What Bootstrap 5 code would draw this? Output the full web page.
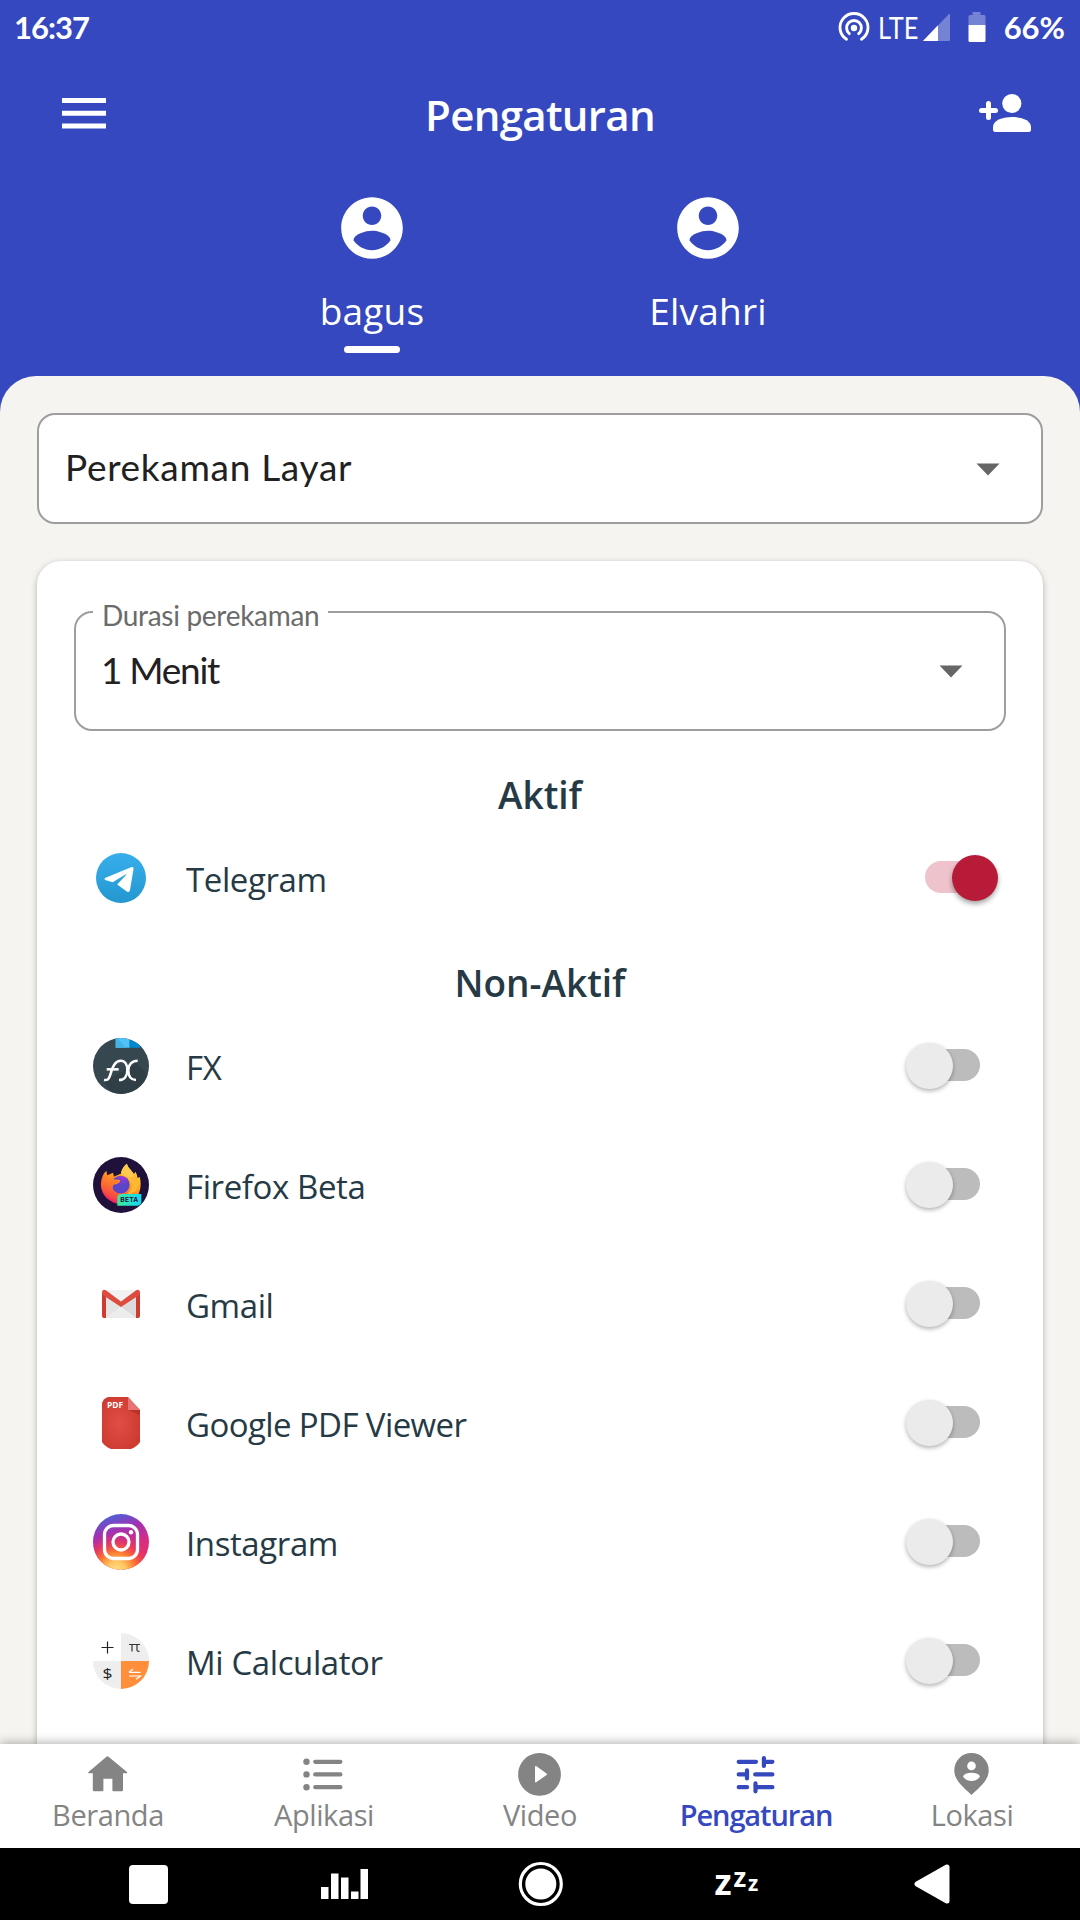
<!DOCTYPE html>
<html lang="id">
<head>
<meta charset="utf-8">
<meta name="viewport" content="width=device-width, initial-scale=1">
<title>Pengaturan</title>
<link href="https://cdn.jsdelivr.net/npm/bootstrap@5.3.0/dist/css/bootstrap.min.css" rel="stylesheet">
<style>
  :root { --brand: #3548c0; --ink: #263a45; }
  body { font-family: "Open Sans", "Noto Sans", sans-serif; color: var(--ink); background: var(--brand); }
  svg { display: block; flex: none; }
  .screen { width: 1080px; height: 1920px; background: var(--brand); }
  .geo { font-family: Lato, "Open Sans", sans-serif; }

  .statusbar { height: 56px; padding: 0 15px 2px 14px; font-size: 31px; line-height: 1; font-weight: 700; }
  .clock { letter-spacing: -1px; }
  .lte { font-size: 30px; font-weight: 400; width: 37px; margin: 0 7px 0 7px; }
  .lte span { display: inline-block; transform: scaleX(.85); transform-origin: 0 50%; }

  .toolbar { height: 116px; padding: 0 49px 0 62px; }
  .toolbar > .side { width: 160px; margin-top: -2px; }
  .toolbar h1 { font-size: 42px; font-weight: 600; letter-spacing: -.7px; margin: 3px 13px 0 0; }

  .profiles { height: 204px; padding: 19px 204px 0; }
  .profile { width: 336px; }
  .profile .who { font-size: 37px; line-height: 46px; letter-spacing: .2px; margin-top: 23px; }
  .profile .bar { width: 56px; height: 7px; border-radius: 4px; background: #fff; margin-top: 12px; }

  .sheet { background: #f5f4f0; border-radius: 36px 36px 0 0; padding: 37px 37px 0; min-height: 0; }
  .picker { border: 2px solid #9e9e9e; border-radius: 18px; background: #fff; color: #212121; font-size: 37px; line-height: 1; }
  .picker-main { height: 111px; padding: 0 41px 0 26px; letter-spacing: .7px; }
  .picker-main span { margin-top: -4px; }
  .picker-main svg { margin-top: 2px; }
  .panel { margin-top: 37px; border-radius: 24px 24px 0 0; padding: 50px 37px 0; box-shadow: 0 2px 6px rgba(0,0,0,.28); border: 0; color: var(--ink); }
  .picker-time { height: 120px; padding: 0 41px 0 25px; letter-spacing: -1.3px; }
  .picker-time .value { margin-top: -3px; }
  .picker-time .tag { left: 17px; top: -13px; padding: 0 9px; background: #fff; color: #6b6b6b; font-size: 28px; line-height: 30px; letter-spacing: -.3px; }

  .group { font-size: 37px; line-height: 48px; font-weight: 600; margin: 0; }
  .group-on { margin-top: 41px; line-height: 46px; }
  .group-off { margin-top: 23px; line-height: 46px; }
  .approw { height: 119px; padding: 0 0 0 19px; border: 0; background: none; color: var(--ink); }
  .approw .icon { width: 56px; height: 56px; }
  .approw .name { font-size: 33px; line-height: 46px; letter-spacing: -.4px; margin-left: 37px; padding-top: 4px; }
  .switch { width: 76px; height: 46px; margin-right: 24px; }
  .switch .track { width: 54px; height: 32px; border-radius: 16px; background: #bcbcbc; right: 2px; top: 6px; }
  .switch .knob { width: 46.5px; height: 46.5px; border-radius: 50%; background: #ebebeb; left: 0; top: 0; box-shadow: 0 2px 4px rgba(0,0,0,.3); }
  .switch.on { margin-right: 8px; }
  .switch.on .track { background: #eec3cc; right: 19px; }
  .switch.on .knob { background: #b81b38; left: auto; right: 0; box-shadow: 0 3px 5px rgba(0,0,0,.35); }

  .tabs { height: 104px; background: #fff; color: #848484; box-shadow: 0 -1px 10px rgba(0,0,0,.32); z-index: 2; }
  .tabs a { color: inherit; text-decoration: none; width: 216px; padding-top: 6px; font-size: 29px; line-height: 33px; letter-spacing: -.4px; }
  .tabs a.active { color: var(--brand); font-weight: 600; letter-spacing: -1.1px; }
  .sysnav { height: 72px; background: #000; padding: 0 50px; }
  .sysnav div { width: 196px; }
</style>
</head>
<body>
<div class="screen d-flex flex-column overflow-hidden mx-auto">

  <header class="text-white">
    <div class="statusbar geo d-flex justify-content-between align-items-center">
      <span class="clock">16:37</span>
      <div class="d-flex align-items-center">
        <svg width="34" height="34" viewBox="0 0 34 34" fill="none" stroke="#fff" stroke-width="2.9" stroke-linecap="round">
          <path d="M9.5 29.3A14 14 0 1 1 24.500 29.3"/><path d="M12.300 23.600A7.400 7.400 0 1 1 21.700 23.600"/><circle cx="17" cy="18" r="3.200" fill="#fff" stroke="none"/>
        </svg>
        <span class="lte"><span>LTE</span></span>
        <svg width="28" height="28" viewBox="0 0 28 28"><path d="M1 28 27 1q1-1 1 1v25q0 1-1 1z" fill="#fff" opacity=".32"/><path d="M1 28 16 12.300V28z" fill="#fff"/></svg>
        <svg width="18" height="32" viewBox="0 0 18 32" style="margin-left:18px"><path d="M4.500 1h8v3H16q1.500 0 1.500 1.500V14H.5V5.500Q.5 4 2 4h2.500z" fill="#fff" opacity=".32"/><path d="M.5 14h17v15.500q0 1.500-1.500 1.500H2Q.5 31 .5 29.500z" fill="#fff"/></svg>
        <span style="margin-left:18px">66%</span>
      </div>
    </div>

    <div class="toolbar d-flex align-items-center">
      <div class="side">
        <svg width="44" height="31" viewBox="0 0 44 31" fill="#fff"><path d="M0 0h44v5H0zM0 12.800h44v5H0zM0 25.500h44v5H0z"/></svg>
      </div>
      <h1 class="flex-grow-1 text-center">Pengaturan</h1>
      <div class="side d-flex justify-content-end">
        <svg width="52" height="40" viewBox="0 0 52 40" fill="#fff"><circle cx="32.800" cy="10.500" r="9.600"/><path d="M14 34c0-6.500 9-10 19-10s19 3.500 19 10v2.500q0 2.500-2.500 2.500h-33Q14 39 14 36.500z"/><path d="M2.500 17.500h14M9.500 10.500v14" stroke="#fff" stroke-width="5" stroke-linecap="round"/></svg>
      </div>
    </div>

    <div class="profiles d-flex">
      <div class="profile d-flex flex-column align-items-center">
        <svg width="74" height="74" viewBox="0 0 24 24" fill="#fff"><path d="M12 2C6.480 2 2 6.480 2 12s4.480 10 10 10 10-4.480 10-10S17.520 2 12 2zm0 3c1.660 0 3 1.340 3 3s-1.340 3-3 3-3-1.340-3-3 1.340-3 3-3zm0 14.200c-2.500 0-4.710-1.280-6-3.220.03-1.990 4-3.080 6-3.080 1.990 0 5.970 1.090 6 3.080-1.290 1.940-3.500 3.220-6 3.220z"/></svg>
        <span class="who">bagus</span>
        <span class="bar"></span>
      </div>
      <div class="profile d-flex flex-column align-items-center">
        <svg width="74" height="74" viewBox="0 0 24 24" fill="#fff"><path d="M12 2C6.480 2 2 6.480 2 12s4.480 10 10 10 10-4.480 10-10S17.520 2 12 2zm0 3c1.660 0 3 1.340 3 3s-1.340 3-3 3-3-1.340-3-3 1.340-3 3-3zm0 14.200c-2.500 0-4.710-1.280-6-3.220.03-1.990 4-3.080 6-3.080 1.990 0 5.970 1.090 6 3.080-1.290 1.940-3.500 3.220-6 3.220z"/></svg>
        <span class="who">Elvahri</span>
      </div>
    </div>
  </header>

  <main class="sheet flex-grow-1 d-flex flex-column">
    <div class="picker picker-main geo d-flex justify-content-between align-items-center">
      <span>Perekaman Layar</span>
      <svg width="24" height="13" viewBox="0 0 24 13"><path d="M.5.5h23L12 12.500z" fill="#666"/></svg>
    </div>

    <section class="panel card flex-grow-1">
      <div class="picker picker-time geo position-relative d-flex justify-content-between align-items-center">
        <span class="tag position-absolute">Durasi perekaman</span>
        <span class="value">1 Menit</span>
        <svg width="24" height="13" viewBox="0 0 24 13"><path d="M.5.5h23L12 12.500z" fill="#666"/></svg>
      </div>

      <h2 class="group group-on text-center">Aktif</h2>
      <div class="approw d-flex align-items-center">
        <svg class="icon" viewBox="0 0 56 56"><defs><linearGradient id="tg" x2="0" y2="1"><stop stop-color="#37aeec"/><stop offset="1" stop-color="#2497d0"/></linearGradient></defs><circle cx="28" cy="28" r="25" fill="url(#tg)"/><path d="M12 28 38 17.300q3-1 2.500 2L37 40q-.7 3-3.200 1.400l-9.600-7 9-9.700q.7-1-.5-.5l-13 8L12.200 30q-1.400-.9-.2-2z" fill="#fff"/></svg>
        <span class="name flex-grow-1">Telegram</span>
        <span class="switch on position-relative"><span class="track position-absolute"></span><span class="knob position-absolute"></span></span>
      </div>

      <h2 class="group group-off text-center">Non-Aktif</h2>
      <div class="approw d-flex align-items-center">
        <svg class="icon" viewBox="9 9 168 168"><defs><clipPath id="disc"><circle cx="93" cy="93" r="84"/></clipPath></defs><g clip-path="url(#disc)"><path d="M0 0h186v186H0z" fill="#37474f"/><path d="M140 85l40 40v60H75L42 140z" fill="#303e46"/><path d="M77 5h42v33H77z" fill="#4fc3f7"/><path d="M77 5l31 33H77z" fill="#46b3e6"/><path d="M119 5h32v33h-32z" fill="#0288d1"/></g><g fill="none" stroke="#fff" stroke-width="7.500"><path d="M42 135C54 137 57 131 61 119C66 98 76 77 92 77C106 77 112 90 112 105C112 122 104 135 87 135"/><path d="M50 103h36"/><path d="M143 77C126 77 115 89 115 106C115 123 122 135 138 135"/></g></svg>
        <span class="name flex-grow-1">FX</span>
        <span class="switch position-relative"><span class="track position-absolute"></span><span class="knob position-absolute"></span></span>
      </div>
      <div class="approw d-flex align-items-center">
        <svg class="icon" viewBox="9 9 168 168"><defs><linearGradient id="ff1" x1=".8" y1="0" x2=".2" y2="1"><stop stop-color="#ffe34a"/><stop offset=".4" stop-color="#ffa51f"/><stop offset=".7" stop-color="#ff5a36"/><stop offset="1" stop-color="#e8127c"/></linearGradient><linearGradient id="ff4" x1=".7" y1="0" x2=".2" y2="1"><stop stop-color="#ff9a20"/><stop offset=".5" stop-color="#ff6a32"/><stop offset="1" stop-color="#f3354e"/></linearGradient><linearGradient id="ff2" x2="1"><stop stop-color="#3dea9a"/><stop offset="1" stop-color="#14d8f5"/></linearGradient><radialGradient id="ff3" cx=".6" cy=".1"><stop stop-color="#a035d6"/><stop offset=".9" stop-color="#5a45c8"/></radialGradient></defs><circle cx="93" cy="93" r="84" fill="#20113a"/><path d="M33 97C32 80 37 60 49 50l3 14 17-8 3 12c8-4 16-7 21-9 1-12 10-25 18-30 2 12 13 18 21 32l4-8c4 6 6 13 7 20l6-5c5 19 4 40-6 57-12 20-32 28-50 26-36-4-58-27-60-54z" fill="url(#ff1)"/><path d="M93 59c1-12 10-25 18-30 2 12 13 18 21 32 12 20 14 38 2 54 0-20-12-42-41-56z" fill="#fdc94e"/><circle cx="92" cy="92" r="27" fill="url(#ff3)"/><path d="M33 90c2-10 9-20 22-23l14 9 21 2c2 8-8 13-19 14-6 9-2 20 10 25 14 5 27 0 34-9 0 22-24 34-46 26-22-8-34-24-36-44z" fill="url(#ff4)"/><path d="M108 67c14 6 20 20 17 33-3 12-11 19-20 22 28 2 43-18 38-46-2-8-6-14-10-17 1 10-7 14-25 8z" fill="#ffb835"/><path d="M82 155v-23q0-12 12-12h60v22q0 13-13 13z" fill="url(#ff2)"/><text x="91" y="145" font-family="Inter" font-weight="700" font-size="20" textLength="54" fill="#20113a">BETA</text></svg>
        <span class="name flex-grow-1">Firefox Beta</span>
        <span class="switch position-relative"><span class="track position-absolute"></span><span class="knob position-absolute"></span></span>
      </div>
      <div class="approw d-flex align-items-center">
        <svg class="icon" viewBox="0 0 56 56"><rect x="9" y="14" width="38" height="28" rx="2" fill="#f1f1f1"/><path d="M13 20v22L28 31z" fill="#e4e4e4"/><path d="M28 33l13 9H13z" fill="#ececec"/><path d="M28 31l15-11v22z" fill="#dcdcdc"/><path d="M9 17v23q0 2 2 2h2V21l-2-5zM47 17v23q0 2-2 2h-2V21l2-5z" fill="#cd3c2f"/><path d="M9 16.500c0-2.700 2.200-3.500 4.200-2L28 25.500l14.800-11c2-1.500 4.200-.7 4.200 2 0 1.500-.5 2.200-1.500 3L28 31 10.500 19.500C9.500 18.700 9 18 9 16.500z" fill="#de4c40"/></svg>
        <span class="name flex-grow-1">Gmail</span>
        <span class="switch position-relative"><span class="track position-absolute"></span><span class="knob position-absolute"></span></span>
      </div>
      <div class="approw d-flex align-items-center">
        <svg class="icon" viewBox="0 0 56 56"><defs><radialGradient id="pdf" cx=".45" cy=".5" r=".6"><stop stop-color="#e14e45"/><stop offset="1" stop-color="#cc3a30"/></radialGradient></defs><path d="M15 2h20l12 13v32c-2 3-5 5.500-9 7H18c-4-1.500-7-4-9-7V8c1-3 3-5 6-6z" fill="url(#pdf)"/><path d="M35 15h12v5z" fill="#a92d25" opacity=".6"/><path d="M35 2l12 13H35z" fill="#e77373"/><text x="14" y="12.500" font-family="Open Sans" font-weight="700" font-size="8.500" textLength="16" lengthAdjust="spacingAndGlyphs" fill="#fff">PDF</text></svg>
        <span class="name flex-grow-1" style="letter-spacing:-.6px">Google PDF Viewer</span>
        <span class="switch position-relative"><span class="track position-absolute"></span><span class="knob position-absolute"></span></span>
      </div>
      <div class="approw d-flex align-items-center">
        <svg class="icon" viewBox="0 0 56 56"><defs><linearGradient id="ig1" x1=".35" y1="0" x2=".65" y2="1"><stop stop-color="#4a62d8"/><stop offset=".28" stop-color="#a032b4"/><stop offset=".6" stop-color="#d82c80"/><stop offset="1" stop-color="#ee3358"/></linearGradient><radialGradient id="ig2" cx=".42" cy="1.020" r=".68"><stop stop-color="#ffe08a"/><stop offset=".25" stop-color="#ffc660"/><stop offset=".5" stop-color="#fb7a30"/><stop offset=".75" stop-color="#ee3f50" stop-opacity=".7"/><stop offset="1" stop-color="#d82c80" stop-opacity="0"/></radialGradient></defs><circle cx="28" cy="28" r="28" fill="url(#ig1)"/><circle cx="28" cy="28" r="28" fill="url(#ig2)"/><g fill="none" stroke="#fff" stroke-width="3.300"><rect x="11.500" y="11.500" width="33" height="33" rx="9"/><circle cx="28" cy="28" r="8"/></g><circle cx="38" cy="18.300" r="2.200" fill="#fff"/></svg>
        <span class="name flex-grow-1">Instagram</span>
        <span class="switch position-relative"><span class="track position-absolute"></span><span class="knob position-absolute"></span></span>
      </div>
      <div class="approw d-flex align-items-center">
        <svg class="icon" viewBox="0 0 56 56"><path d="M28 0a28 28 0 0 1 28 28H28z" fill="#eee"/><path d="M0 28h28v28A28 28 0 0 1 0 28z" fill="#eee"/><path d="M28 28h28a28 28 0 0 1-28 28z" fill="#ff8f3b"/><path d="M8.500 14.500h12M14.500 8.500v12" stroke="#222" stroke-width="1.200"/><path d="M36 11.500h11M39 11.500v7M44 11.500v5.500q0 1.500 2.500 1.300" fill="none" stroke="#333" stroke-width="1.200"/><text x="14.500" y="46" text-anchor="middle" font-family="Open Sans" font-size="15" textLength="10" lengthAdjust="spacingAndGlyphs" fill="#222">$</text><path d="M36 39.300h11.500M36 39.300l4-3.300M36 43h11.500l-4.500 3.300" fill="none" stroke="#fff" stroke-width="1.200"/></svg>
        <span class="name flex-grow-1">Mi Calculator</span>
        <span class="switch position-relative"><span class="track position-absolute"></span><span class="knob position-absolute"></span></span>
      </div>
    </section>
  </main>

  <nav class="tabs d-flex position-relative">
    <a href="#" class="d-flex flex-column align-items-center">
      <svg width="48" height="48" viewBox="0 0 48 48" fill="currentColor"><path d="M22.500 6.700q1-.9 2 0L43 22q.8 1.300-.5 1.300H39V40q0 1.300-1.300 1.300h-8q-1.300 0-1.300-1.300V28.800h-9V40q0 1.300-1.300 1.300h-8Q8.800 41.300 8.800 40V23.300H5q-1.300 0-.5-1.300z"/></svg>
      <span>Beranda</span>
    </a>
    <a href="#" class="d-flex flex-column align-items-center">
      <svg width="48" height="48" viewBox="0 0 48 48" fill="currentColor"><circle cx="6.500" cy="11.700" r="3.200"/><circle cx="6.500" cy="24.400" r="3.200"/><circle cx="6.500" cy="37.200" r="3.200"/><path d="M15.200 11.800h25.200M15.200 24.400h25.200M15.200 37.200h25.200" stroke="currentColor" stroke-width="4.200" stroke-linecap="round"/></svg>
      <span>Aplikasi</span>
    </a>
    <a href="#" class="d-flex flex-column align-items-center">
      <svg width="48" height="48" viewBox="0 0 48 48" fill="currentColor"><path fill-rule="evenodd" d="M23.500 3a21.400 21.400 0 1 0 .01 0zM19 17q0-1.500 1.500-.7l10 7.100q1 .8 0 1.600l-10 7.100q-1.500.8-1.500-.7z"/></svg>
      <span>Video</span>
    </a>
    <a href="#" class="active d-flex flex-column align-items-center">
      <svg width="48" height="48" viewBox="0 0 48 48" fill="none" stroke="currentColor" stroke-width="4.200" stroke-linecap="round"><path d="M6.700 11.800H24M31.900 8v8M32 11.800h8.400M6.700 24.400H15M15 20.400v8M23.200 24.400h17.200M6.700 37.200h8.400M23.500 33.300v8M23.500 37.200h16.900"/></svg>
      <span>Pengaturan</span>
    </a>
    <a href="#" class="d-flex flex-column align-items-center">
      <svg width="48" height="48" viewBox="0 0 48 48" fill="currentColor"><path d="M23.500 3A17.200 17.200 0 0 0 6.300 20.500C6.300 30 15 37 23.500 45 32 37 40.700 30 40.700 20.500A17.200 17.200 0 0 0 23.500 3z"/><circle cx="23.500" cy="15.900" r="4.300" fill="#fff"/><path d="M15 26.500q1.500-3.700 8.500-3.700t8.500 3.700Q29 31 23.500 31T15 26.500z" fill="#fff"/></svg>
      <span>Lokasi</span>
    </a>
  </nav>

  <footer class="sysnav d-flex align-items-center justify-content-center">
    <div class="d-flex justify-content-center"><svg width="39" height="39" viewBox="0 0 39 39"><rect width="39" height="39" rx="4" fill="#fff"/></svg></div>
    <div class="d-flex justify-content-center"><svg width="48" height="32" viewBox="-1 0 48 32" fill="#fff"><path d="M0 19h7.500v12H0zM10 5.500h7.500V31H10zM20 9.500h7.500V31H20zM30 23.500h7.500V31H30zM39.500 1H47v30h-7.500z"/></svg></div>
    <div class="d-flex justify-content-center"><svg width="46" height="46" viewBox="-.8 0 46 46"><circle cx="23" cy="23" r="20.500" fill="none" stroke="#fff" stroke-width="3.200"/><circle cx="23" cy="23" r="15.500" fill="#fff"/></svg></div>
    <div class="d-flex justify-content-center"><svg width="60" height="60" viewBox="-8.500 -17 60 60" fill="#fff" font-family="Open Sans" font-weight="700"><text x="0" y="24" font-size="35">z</text><text x="19" y="15.500" font-size="26">z</text><text x="33.500" y="20" font-size="21">z</text></svg></div>
    <div class="d-flex justify-content-center"><svg width="36" height="40" viewBox="0 0 36 40"><path d="M3 20 33 3v34z" fill="#fff" stroke="#fff" stroke-width="5" stroke-linejoin="round"/></svg></div>
  </footer>
</div>
<script src="https://cdn.jsdelivr.net/npm/bootstrap@5.3.0/dist/js/bootstrap.bundle.min.js"></script>
</body>
</html>
